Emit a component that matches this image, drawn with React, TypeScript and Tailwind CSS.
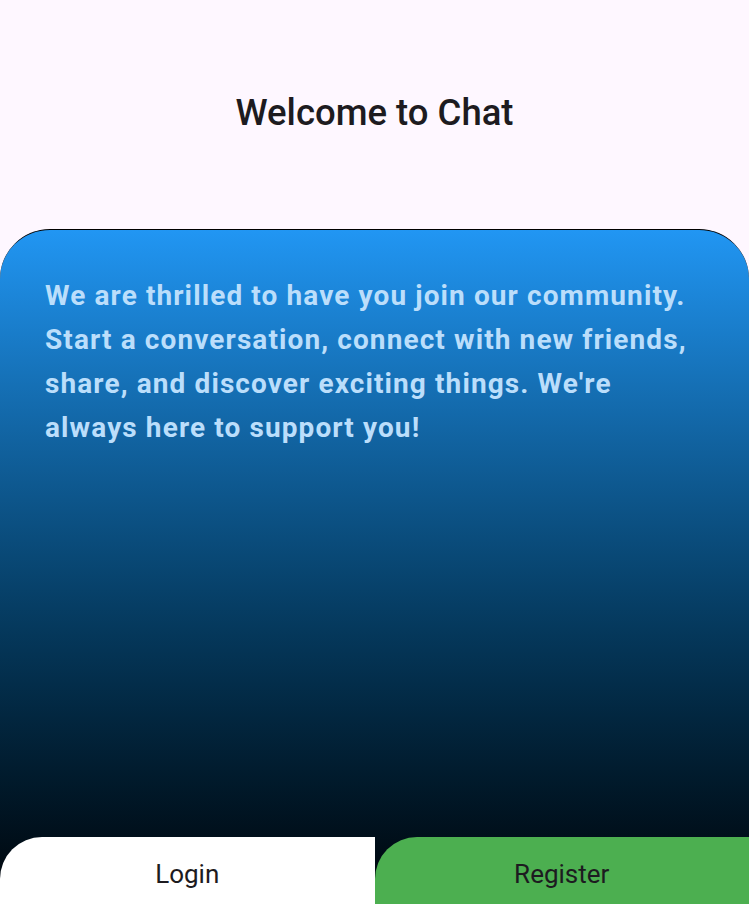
import React from 'react';

const App = () => {
    return (
        <div className="flex flex-col h-[904px] w-full bg-[#fef7ff] font-['Roboto',sans-serif] overflow-hidden">
            {/* Header */}
            <div className="h-[229px] flex justify-center pt-[91px]">
                <h1 className="text-[36.5px] leading-[44px] text-[#1d1b20] font-medium">Welcome to Chat</h1>
            </div>

            {/* Card */}
            <div className="flex-1 flex flex-col rounded-t-[50px] border-t border-black bg-gradient-to-b from-[#2196f3] to-[#000509] overflow-hidden">
                <div className="flex-1 px-[45px] pt-[44px]">
                    <p className="text-[28px] leading-[44px] font-bold tracking-[1.1px] text-[#bbdefb]">
                        We are thrilled to have you join our community. Start a conversation, connect with new friends, share, and discover exciting things. We're always here to support you!
                    </p>
                </div>
                <div className="flex h-[67px]">
                    <button className="flex-1 bg-white rounded-tl-[42px] text-[26px] text-[#1d1b20] flex items-center justify-center pt-2">
                        Login
                    </button>
                    <button className="flex-1 bg-[#4caf50] rounded-tl-[42px] text-[26px] text-[#1d1b20] flex items-center justify-center pt-2">
                        Register
                    </button>
                </div>
            </div>
        </div>
    );
};

export default App;
